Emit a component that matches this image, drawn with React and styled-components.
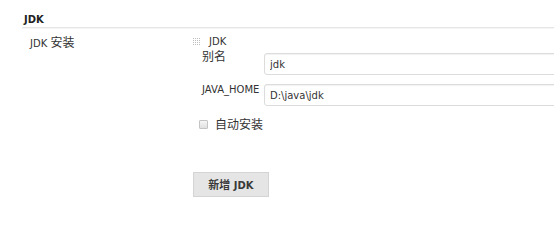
import React from 'react';
import styled, { createGlobalStyle } from 'styled-components';

const Global = createGlobalStyle`
  body {
    margin: 0;
    background: #fff;
    font-family: "DejaVu Sans", Verdana, "Noto Sans CJK SC", sans-serif;
    font-size: 10px;
    line-height: 12px;
    color: #333;
    overflow: hidden;
  }
`;

const Page = styled.div`
  width: 554px;
  height: 203px;
  overflow: hidden;
`;

// chinese glyphs sit a size above the latin text in the original
const Cjk = styled.span`
  font-family: "Noto Sans CJK SC", sans-serif;
  font-size: ${p => p.$size || 12}px;
`;

const SectionHeader = styled.div`
  margin: 13px 0 0 22px;
  padding: 0 0 1px 2px;
  line-height: 13px;
  font-weight: bold;
  color: #222;
  border-bottom: 1px solid #e6e6e6;
  box-shadow: 0 1px 0 #f5f5f5;
`;

const Row = styled.div`
  display: grid;
  grid-template-columns: 163px 1fr;
  padding: 8px 0 0 30px;
`;

const Label = styled.div`
  line-height: 12px;
`;

const Content = styled.div`
  display: flex;
  flex-direction: column;
`;

const Repeated = styled.div`
  display: flex;
  align-items: center;
  gap: 9px;
  height: 12px;
`;

const Fields = styled.div`
  display: grid;
  grid-template-columns: 62px 1fr;
  row-gap: 9px;
  margin-left: 9px;
`;

const FieldLabel = styled.div`
  padding-top: ${p => p.$top || 0}px;
  line-height: 12px;
`;

const Input = styled.input`
  box-sizing: border-box;
  width: 320px;
  height: 22px;
  margin: ${p => p.$mt || 0}px 0 0;
  padding: 2px 5px;
  border: 1px solid #dcdcdc;
  border-radius: 3px;
  box-shadow: inset 0 1px 1px #f2f2f2;
  font: inherit;
  color: #333;
  outline: none;
`;

const CheckRow = styled.label`
  display: flex;
  align-items: center;
  gap: 7px;
  height: 12px;
  margin: 12px 0 0 6px;
`;

const Box = styled.span`
  box-sizing: border-box;
  width: 9px;
  height: 9px;
  border: 1px solid #c4c4c4;
  border-radius: 1px;
  background: linear-gradient(#f6f6f6, #e0e0e0);
`;

const AddButton = styled.button`
  box-sizing: border-box;
  width: 76px;
  height: 25px;
  margin-top: 42px;
  padding: 0;
  border: 1px solid #d4d4d4;
  background: #e5e5e5;
  font: inherit;
  font-weight: bold;
  color: #3a3a3a;
  border-radius: 0;
`;

function Handle() {
  const dots = [];
  for (let r = 0; r < 4; r++) {
    for (let c = 0; c < 4; c++) {
      dots.push(<rect key={r + '-' + c} x={c * 2} y={r * 2} width="1" height="1" fill="#bdbdbd" />);
    }
  }
  return (
    <svg width="7" height="8" viewBox="0 0 7 8">
      {dots}
    </svg>
  );
}

export default function App() {
  return (
    <Page>
      <Global />
      <SectionHeader>JDK</SectionHeader>
      <Row>
        <Label>JDK <Cjk>安装</Cjk></Label>
        <Content>
          <Repeated>
            <Handle />
            <span>JDK</span>
          </Repeated>
          <Fields>
            <FieldLabel $top={2}><Cjk>别名</Cjk></FieldLabel>
            <Input $mt={5} defaultValue="jdk" />
            <FieldLabel $top={0}>JAVA_HOME</FieldLabel>
            <Input defaultValue="D:\java\jdk" />
          </Fields>
          <CheckRow>
            <Box />
            <Cjk>自动安装</Cjk>
          </CheckRow>
          <div>
            <AddButton><Cjk $size={11}>新增</Cjk> JDK</AddButton>
          </div>
        </Content>
      </Row>
    </Page>
  );
}
